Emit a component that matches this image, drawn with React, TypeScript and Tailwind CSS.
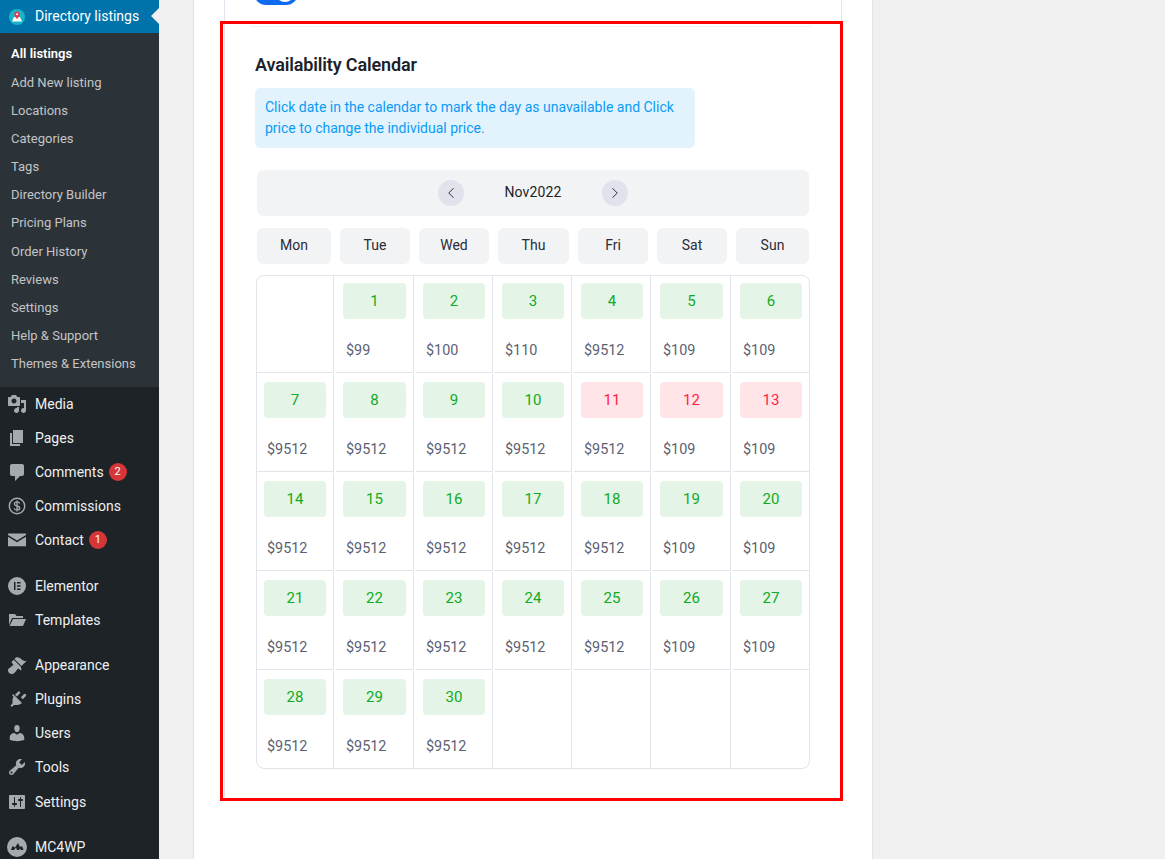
import { ChevronLeft, ChevronRight } from "lucide-react";
import type { ReactNode } from "react";

const subItems = [
  { label: "Add New listing", h: "mt-[1px] h-[28px]" },
  { label: "Locations", h: "h-[28px]" },
  { label: "Categories", h: "h-[28px]" },
  { label: "Tags", h: "h-[28px]" },
  { label: "Directory Builder", h: "h-[28px]" },
  { label: "Pricing Plans", h: "h-[28px]" },
  { label: "Order History", h: "mt-[1px] h-[28px]" },
  { label: "Reviews", h: "h-[28px]" },
  { label: "Settings", h: "h-[28px]" },
  { label: "Help & Support", h: "h-[28px]" },
  { label: "Themes & Extensions", h: "h-[28px]" },
];

const I = ({ children }: { children: ReactNode }) => (
  <svg width="20" height="20" viewBox="0 0 20 20" fill="#a7aaad">
    {children}
  </svg>
);

const icons: Record<string, ReactNode> = {
  Media: (
    <I>
      <path d="M13 11V4c0-.55-.45-1-1-1h-1.670L9 1H5L3.670 3H2c-.55 0-1 .45-1 1v7c0 .55.45 1 1 1h10c.55 0 1-.45 1-1zM7 4.500c1.380 0 2.500 1.120 2.500 2.500S8.380 9.500 7 9.500 4.500 8.380 4.500 7 5.620 4.500 7 4.500zM14 6h5v10.500c0 1.380-1.120 2.500-2.500 2.500S14 17.880 14 16.500s1.120-2.500 2.500-2.500c.17 0 .34.02.5.05V9h-3V6zm-4 8.050V13h2v3.500c0 1.380-1.120 2.500-2.500 2.500S7 17.880 7 16.500 8.120 14 9.500 14c.17 0 .34.02.5.05z" />
    </I>
  ),
  Pages: (
    <I>
      <path d="M6 15V2h10v13H6zm-1 1h8v2H3V5h2v11z" />
    </I>
  ),
  Comments: (
    <I>
      <path d="M5 2h10c1.100 0 2 .9 2 2v8c0 1.100-.9 2-2 2h-2l-5 5v-5H5c-1.100 0-2-.9-2-2V4c0-1.100.9-2 2-2z" />
    </I>
  ),
  Commissions: (
    <svg width="20" height="20" viewBox="0 0 20 20" fill="none">
      <circle cx="10" cy="10" r="7.700" stroke="#a7aaad" strokeWidth="1.400" />
      <path
        d="M12.700 7.400c-.4-1-1.400-1.500-2.700-1.500-1.500 0-2.600.8-2.600 2 0 2.800 5.400 1.400 5.400 4.200 0 1.200-1.200 2-2.800 2-1.400 0-2.500-.6-2.900-1.700M10 4.500v11"
        stroke="#a7aaad"
        strokeWidth="1.300"
      />
    </svg>
  ),
  Contact: (
    <I>
      <path d="M1 3.500h18v1.500l-9 5.500-9-5.500V3.500zm0 3.300 9 5.500 9-5.500v9.500H1V6.800z" />
    </I>
  ),
  Elementor: (
    <I>
      <path
        fillRule="evenodd"
        d="M10 1a9 9 0 1 0 0 18 9 9 0 0 0 0-18zM7 6h1.500v8H7V6zm3 0h3.500v1.500H10V6zm0 3.200h3.500v1.500H10V9.200zm0 3.300h3.500V14H10v-1.500z"
      />
    </I>
  ),
  Templates: (
    <I>
      <path d="M2 4h6l1.500 2H16v2H5L2 15V4zm4 5h13l-3 7H2.500L6 9z" />
    </I>
  ),
  Appearance: (
    <I>
      <path d="M14.480 11.060 7.410 3.990l1.500-1.500c.5-.56 2.300-.47 3.510.32 1.210.8 1.430 1.280 2.910 2.100 1.180.64 2.450 1.260 4.450.85zm-.71.71L6.700 4.700 4.930 6.470c-.39.39-.39 1.020 0 1.410l1.060 1.060c.39.39.39 1.030 0 1.420-.6.6-1.430 1.110-2.210 1.690-.35.26-.7.53-1.010.84C1.430 13.230 1 14.230 1 15.220c0 1.020.4 1.990 1.130 2.720C2.840 18.610 3.790 19 4.770 19c1.010 0 2.010-.43 3.350-1.770.31-.31.58-.66.84-1.020.58-.77 1.090-1.600 1.690-2.200.39-.39 1.030-.39 1.420 0l1.060 1.060c.39.39 1.020.39 1.410 0z" />
    </I>
  ),
  Plugins: (
    <I>
      <path d="M13.110 4.360 9.870 7.600 8 5.730l3.240-3.240c.35-.34 1.050-.2 1.560.32.52.51.66 1.210.31 1.550zm-8 1.770.91-1.120 9.010 9.010-1.190.84c-.71.71-2.120 1.160-3.410 1.160H6.870l-1.480 1.480c-.39.39-1.020.39-1.410 0-.39-.39-.39-1.020 0-1.410l1.480-1.480v-3.400c0-1.290.45-2.690 1.160-3.400zm8.770 2.160 3.240-3.240c.34-.35 1.040-.21 1.550.31.52.51.66 1.210.32 1.560l-3.240 3.240-1.870-1.870z" />
    </I>
  ),
  Users: (
    <I>
      <path d="M10 9.250c-2.270 0-2.730-3.440-2.730-3.440C7 4.020 7.820 2 9.970 2c2.160 0 2.980 2.020 2.710 3.810 0 0-.41 3.440-2.680 3.440zm0 2.570L12.720 10c2.390 0 4.520 2.330 4.520 4.530v2.490s-3.650 1.130-7.240 1.130c-3.650 0-7.240-1.130-7.240-1.130v-2.490c0-2.250 1.940-4.480 4.470-4.480z" />
    </I>
  ),
  Tools: (
    <I>
      <path d="M16.680 9.770c-1.340 1.340-3.300 1.670-4.950.99l-5.410 6.520c-.99.99-2.590.99-3.570 0-.99-.99-.99-2.580 0-3.570l6.520-5.420c-.68-1.650-.35-3.610.99-4.950 1.280-1.280 3.120-1.620 4.720-1.060l-2.890 2.890 2.820 2.820 2.860-2.870c.53 1.580.18 3.390-1.090 4.670zM3.810 16.210c.4.39 1.030.39 1.420 0 .4-.4.4-1.030 0-1.430-.39-.39-1.020-.39-1.420 0-.39.4-.39 1.030 0 1.430z" />
    </I>
  ),
  Settings: (
    <I>
      <path d="M18 16V4c0-.55-.45-1-1-1H3c-.55 0-1 .45-1 1v12c0 .55.45 1 1 1h14c.55 0 1-.45 1-1zM8 11h1c.55 0 1 .45 1 1s-.45 1-1 1H8v1.500c0 .28-.22.5-.5.5s-.5-.22-.5-.5V13H6c-.55 0-1-.45-1-1s.45-1 1-1h1V5.500c0-.28.22-.5.5-.5s.5.22.5.5V11zm5-2h-1c-.55 0-1-.45-1-1s.45-1 1-1h1V5.500c0-.28.22-.5.5-.5s.5.22.5.5V7h1c.55 0 1 .45 1 1s-.45 1-1 1h-1v5.500c0 .28-.22.5-.5.5s-.5-.22-.5-.5V9z" />
    </I>
  ),
  MC4WP: (
    <I>
      <path
        fillRule="evenodd"
        d="M10 0a10 10 0 1 0 0 20 10 10 0 0 0 0-20zM4 13l1.500-4 2.500 1.500L11 6l2 4 2-1 1.500 4h-2.500l-1-1.500-1 1.500H10l-1-2.500-2 2.500H4z"
      />
    </I>
  ),
};

const MenuItem = ({
  label,
  badge,
  className = "",
}: {
  label: string;
  badge?: string;
  className?: string;
}) => (
  <div className={`flex h-[34px] shrink-0 items-center text-[14px] text-[#f0f0f1] ${className}`}>
    <span className="flex w-[35px] justify-center pl-[1px] pr-[3px]">
      {icons[label]}
    </span>
    <span>{label}</span>
    {badge && (
      <span className="ml-[5px] flex size-[18px] items-center justify-center rounded-full bg-[#d63638] text-[11px] text-white">
        {badge}
      </span>
    )}
  </div>
);

const Sidebar = () => (
  <aside className="flex h-[859px] w-[159px] shrink-0 flex-col overflow-hidden bg-[#1d2327]">
    <div className="relative flex h-[33px] shrink-0 items-center bg-[#0073aa] text-[14px] text-white">
      <span className="flex w-[35px] justify-center pl-[1px] pr-[2px]">
        <svg width="16" height="16" viewBox="0 0 16 16">
          <circle cx="8" cy="8" r="8" fill="#17b5c8" />
          <path d="M3 12.500 5 8h6l2 4.500z" fill="#fff" />
          <path d="M8 2.500a2.700 2.700 0 0 1 2.700 2.700C10.700 7.200 8 10 8 10S5.300 7.200 5.300 5.200A2.700 2.700 0 0 1 8 2.500z" fill="#e8384f" />
          <circle cx="8" cy="5.200" r="1" fill="#fff" />
        </svg>
      </span>
      Directory listings
      <span className="absolute right-0 top-[8px] size-0 border-y-[8px] border-r-[8px] border-y-transparent border-r-[#f0f0f1]" />
    </div>
    <div className="flex h-[354px] shrink-0 flex-col bg-[#2c3338] pt-[7px] text-[13px] text-[#c3c4c7]">
      <div className="flex h-[28px] items-center pl-[11px] font-semibold text-white">All listings</div>
      {subItems.map((item) => (
        <div key={item.label} className={`flex ${item.h} items-center pl-[11px]`}>
          {item.label}
        </div>
      ))}
    </div>
    <MenuItem label="Media" />
    <MenuItem label="Pages" />
    <MenuItem label="Comments" badge="2" />
    <MenuItem label="Commissions" />
    <MenuItem label="Contact" badge="1" />
    <MenuItem label="Elementor" className="mt-[12px]" />
    <MenuItem label="Templates" />
    <MenuItem label="Appearance" className="mt-[11px]" />
    <MenuItem label="Plugins" />
    <MenuItem label="Users" />
    <MenuItem label="Tools" />
    <MenuItem label="Settings" className="mt-[1px]" />
    <MenuItem label="MC4WP" className="mt-[11px]" />
  </aside>
);

const weekDays = [
  { d: "Mon", w: "w-[74px]" },
  { d: "Tue", w: "w-[70px]" },
  { d: "Wed", w: "w-[70px]" },
  { d: "Thu", w: "w-[71px]" },
  { d: "Fri", w: "w-[70px]" },
  { d: "Sat", w: "w-[70px]" },
  { d: "Sun", w: "w-[73px]" },
];

const prices: Record<number, string> = { 1: "$99", 2: "$100", 3: "$110" };
const colWidths = [77, 80, 79, 79, 79, 80, 78];

const priceFor = (day: number, col: number) => {
  if (prices[day]) return prices[day];
  return col >= 5 ? "$109" : "$9512";
};

const rows: (number | null)[][] = [
  [null, 1, 2, 3, 4, 5, 6],
  [7, 8, 9, 10, 11, 12, 13],
  [14, 15, 16, 17, 18, 19, 20],
  [21, 22, 23, 24, 25, 26, 27],
  [28, 29, 30, null, null, null, null],
];

const rowHeights = ["h-[97px]", "h-[99px]", "h-[99px]", "h-[99px]", "h-[98px]"];

const Cell = ({ day, col, row }: { day: number | null; col: number; row: number }) => {
  const booked = day !== null && day >= 11 && day <= 13;
  const last = col === 6;
  return (
    <div
      className={`relative h-full shrink-0 pr-[7px] ${col === 0 ? "pl-[7px]" : "pl-[9px]"} ${row === 0 ? "pt-[7px]" : "pt-[9px]"} ${last ? "" : "border-r border-[#e3e3ec]"}`}
      style={{ width: colWidths[col] }}
    >
      {day !== null && (
        <>
          <div
            className={`flex h-[36px] items-center justify-center rounded-[4px] text-[15px] ${
              booked ? "bg-[#ffe5e8] text-[#ff1f45]" : "bg-[#e4f4e6] text-[#10ab24]"
            }`}
          >
            {day}
          </div>
          <div className="mt-[22px] pl-[3px] text-[14.4px] leading-[20px] text-[#5b5f72]">
            {priceFor(day, col)}
          </div>
        </>
      )}
      {/* small breaks where the table lines cross */}
      {!last && row < rows.length - 1 && (
        <span className="absolute left-[calc(100%+1px)] top-full h-px w-[2px] bg-white" />
      )}
      {!last && row > 0 && (
        <span className="absolute right-[-1px] top-0 h-px w-px bg-white" />
      )}
    </div>
  );
};

const Calendar = () => (
  <div className="ml-[1px] w-[554px]">
    <div className="ml-[1px] flex h-[46px] w-[552px] items-center justify-center rounded-[6px] bg-[#f2f3f5]">
      <button className="flex size-[26px] items-center justify-center rounded-full bg-[#e0e2ec] text-[#23242c]">
        <ChevronLeft size={18} strokeWidth={1.25} />
      </button>
      <span className="w-[138px] pb-[2px] text-center text-[14px] tracking-[0.15px] text-[#1d1f29]">Nov2022</span>
      <button className="flex size-[26px] items-center justify-center rounded-full bg-[#e0e2ec] text-[#23242c]">
        <ChevronRight size={18} strokeWidth={1.25} />
      </button>
    </div>
    <div className="ml-[1px] mt-[12px] flex w-[552px] justify-between">
      {weekDays.map(({ d, w }) => (
        <div
          key={d}
          className={`flex h-[36px] ${w} items-center justify-center rounded-[6px] bg-[#f2f3f5] pb-[2px] text-[14px] text-[#2a2c38]`}
        >
          {d}
        </div>
      ))}
    </div>
    <div className="mt-[11px] overflow-hidden rounded-[8px] border border-[#e3e3ec]">
      {rows.map((row, i) => (
        <div
          key={i}
          className={`flex ${rowHeights[i]} ${i < rows.length - 1 ? "border-b border-[#e3e3ec]" : ""}`}
        >
          {row.map((day, col) => (
            <Cell key={col} day={day} col={col} row={i} />
          ))}
        </div>
      ))}
    </div>
  </div>
);

export default function App() {
  return (
    <div
      className="flex h-[859px] overflow-hidden bg-[#f0f0f1]"
      style={{ fontFamily: "Roboto, sans-serif" }}
    >
      <Sidebar />
      <main className="ml-[34px] h-full w-[680px] border-x border-[#e2e4e7] bg-white">
        <div className="ml-[30px] h-[797px] w-[618px] border-x border-[#e2e4ee]">
          <div className="relative ml-[29px] h-[5px] w-[44px] overflow-hidden">
            <div className="-mt-[19px] h-[24px] rounded-full bg-[#0f6af0]" />
            <span className="absolute left-[21px] top-[-18px] size-[20px] rounded-full bg-white" />
          </div>
          <div className="relative -ml-[5px] mt-[16px] h-[780px] w-[623px] border-[3px] border-[#f00] pl-[32px] pt-[2px]">
            <div className="-ml-[5px] h-px w-[561px] bg-[#f1f1f1]" />
            <h2 className="mt-[25px] text-[18px] font-semibold leading-[26px] tracking-[-0.15px] text-[#1d1f29]">Availability Calendar</h2>
            <p className="mt-[10px] w-[440px] rounded-[5px] bg-[#e3f3fd] px-[10px] py-[9px] text-[14px] leading-[21px] text-[#0a9bf5]">
              Click date in the calendar to mark the day as unavailable and Click price to change the individual price.
            </p>
            <div className="mt-[22px]">
              <Calendar />
            </div>
          </div>
        </div>
      </main>
    </div>
  );
}
